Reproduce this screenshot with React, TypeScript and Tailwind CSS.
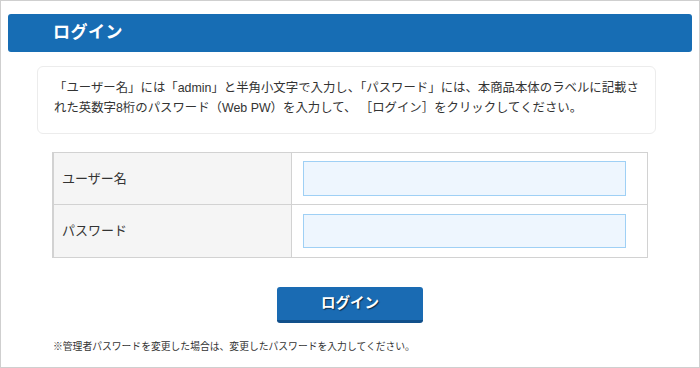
export default function App() {
  return (
    <div
      className="w-[700px] h-[368px] border border-[#cfcfcf] bg-white text-[#333] overflow-hidden"
      style={{ fontFamily: '"Liberation Sans", "Noto Sans CJK JP", sans-serif' }}
    >
      {/* Title bar */}
      <div className="ml-[7px] mt-[13px] w-[684px] h-[38px] rounded-[3px] bg-[#176db4] flex items-center pl-[45px]">
        <h1 className="text-white text-[17px] font-bold tracking-[0.5px]">ログイン</h1>
      </div>

      {/* Info box */}
      <div className="ml-[36px] mt-[14px] w-[619px] h-[68px] rounded-[6px] border border-[#ececec] pl-[16px] pt-[11px] text-[12.4px] leading-[20px] text-[#333]">
        「ユーザー名」には「admin」と半角小文字で入力し、「パスワード」には、本商品本体のラベルに記載さ
        <br />
        れた英数字8桁のパスワード（Web PW）を入力して、 ［ログイン］をクリックしてください。
      </div>

      {/* Form table */}
      <div className="ml-[51px] mt-[18px] w-[596px] border border-[#d2d2d2] border-l-2 text-[13px]">
        <div className="flex h-[52px] border-b border-[#d2d2d2]">
          <div className="w-[238px] bg-[#f5f5f5] border-r border-[#d2d2d2] flex items-center pl-[8px]">
            ユーザー名
          </div>
          <div className="flex-1 pl-[11px] pt-[8px]">
            <input
              type="text"
              className="w-[323px] h-[35px] bg-[#eef6fe] border border-[#9fd0f5] outline-none"
            />
          </div>
        </div>
        <div className="flex h-[52px]">
          <div className="w-[238px] bg-[#f5f5f5] border-r border-[#d2d2d2] flex items-center pl-[8px]">
            パスワード
          </div>
          <div className="flex-1 pl-[11px] pt-[9px]">
            <input
              type="password"
              className="w-[323px] h-[34px] bg-[#eef6fe] border border-[#9fd0f5] outline-none"
            />
          </div>
        </div>
      </div>

      {/* Submit */}
      <div className="flex justify-center mt-[29px]">
        <button className="w-[146px] h-[36px] rounded-[3px] bg-[#1a6bb3] border-b-[3px] border-[#11508b] text-white text-[14.5px] font-bold [text-shadow:1px_1px_1px_rgba(0,0,0,0.6)]">
          ログイン
        </button>
      </div>

      <p className="ml-[52px] mt-[18px] text-[9.8px] leading-[12px] text-[#333]">
        ※管理者パスワードを変更した場合は、変更したパスワードを入力してください。
      </p>
    </div>
  );
}
